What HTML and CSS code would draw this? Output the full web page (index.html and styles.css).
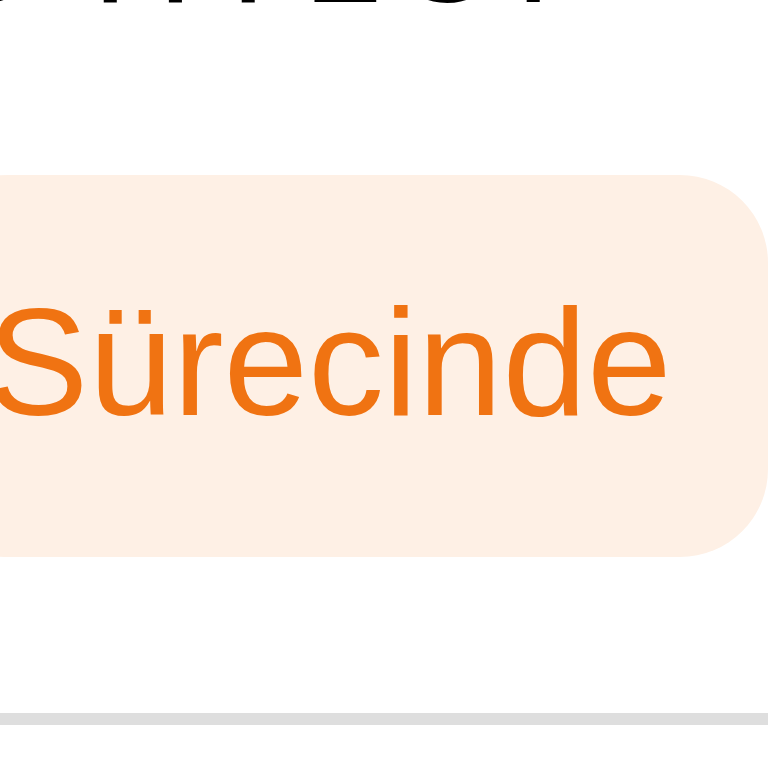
FILE: index.html
```html
<!DOCTYPE html>
<html>
<head>
<meta charset="utf-8">
<link rel="stylesheet" href="styles.css">
</head>
<body>
<div class="page">
  <h1 class="title">S HTLOI</h1>
  <div class="badge-row"><span class="badge">Sürecinde</span></div>
  <div class="divider"></div>
</div>
</body>
</html>
```
FILE: styles.css
```css
html, body {
  margin: 0;
  padding: 0;
  background: #ffffff;
}
.page {
  width: 768px;
  height: 768px;
  overflow: hidden;
  font-family: "Liberation Sans", Arial, sans-serif;
}
.title {
  margin: -116px 0 0 -64px;
  font-size: 140px;
  line-height: 1;
  height: 140px;
  font-weight: 400;
  letter-spacing: 12px;
  color: #000000;
  white-space: nowrap;
}
.badge-row {
  margin-top: 151px;
  white-space: nowrap;
}
.badge {
  display: inline-block;
  margin-left: -80px;
  padding: 111px 97px 119px 67px;
  border-radius: 88px;
  background: #fef0e5;
  color: #f07312;
  font-size: 152px;
  line-height: 1;
  height: 152px;
}
.divider {
  margin-top: 156px;
  height: 12px;
  background: #dedede;
}
```
